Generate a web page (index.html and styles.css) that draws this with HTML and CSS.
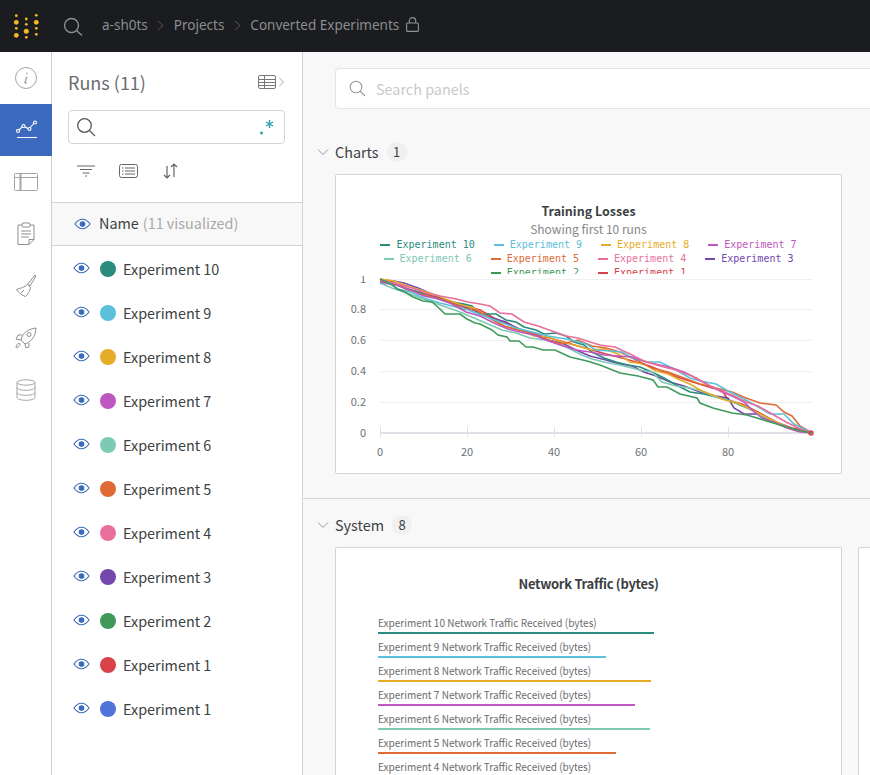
FILE: index.html
```html
<!DOCTYPE html>
<html lang="en">
<head>
    <meta charset="UTF-8">
    <meta name="viewport" content="width=device-width, initial-scale=1.0">
    <title>Converted Experiments</title>
    <link rel="stylesheet" href="styles.css">
</head>
<body>
    <svg class="defs" width="0" height="0">
        <symbol id="eye" viewBox="0 0 18 12">
            <path d="M1 6C3.500 2.600 6 1 9 1s5.500 1.600 8 5c-2.500 3.400-5 5-8 5S3.500 9.400 1 6z" fill="none" stroke="#3a69bd" stroke-width="1.200"/>
            <circle cx="9" cy="6" r="3" fill="#3a69bd"/>
        </symbol>
        <symbol id="chev" viewBox="0 0 12 8">
            <path d="M1 1.500l5 5 5-5" fill="none" stroke="#999" stroke-width="1"/>
        </symbol>
    </svg>

    <!-- Top bar -->
    <header class="topbar">
        <svg class="logo" width="28" height="28" viewBox="0 0 28 28" fill="#f5b921">
            <circle cx="4.300" cy="3.700" r="1.400"/><circle cx="4.300" cy="10.300" r="2.400"/><circle cx="4.300" cy="16.300" r="1.400"/><circle cx="4.300" cy="23.300" r="2.400"/>
            <circle cx="14.300" cy="7" r="1.400"/><circle cx="14.300" cy="12.300" r="1.400"/><circle cx="14.300" cy="19.300" r="2.500"/><circle cx="14.300" cy="25.300" r="1.400"/>
            <circle cx="24.300" cy="3.300" r="1.400"/><circle cx="24.300" cy="10.300" r="2.400"/><circle cx="24.300" cy="16.300" r="1.400"/><circle cx="24.300" cy="22.300" r="1.400"/>
        </svg>
        <svg class="top-search" width="20" height="20" viewBox="0 0 20 20" fill="none" stroke="#8f9194" stroke-width="1.400">
            <circle cx="8.500" cy="8.500" r="7"/><path d="M13.500 13.500l5.500 5"/>
        </svg>
        <nav class="crumbs">
            <span>a-sh0ts</span>
            <svg width="7" height="11" viewBox="0 0 7 11"><path d="M1 1l5 4.500-5 4.500" fill="none" stroke="#55575a"/></svg>
            <span>Projects</span>
            <svg width="7" height="11" viewBox="0 0 7 11"><path d="M1 1l5 4.500-5 4.500" fill="none" stroke="#55575a"/></svg>
            <span>Converted Experiments</span>
            <svg width="13" height="15" viewBox="0 0 13 15" fill="none" stroke="#8f9194" stroke-width="1.100"><rect x="0.600" y="6" width="11.800" height="8.400" rx="1"/><path d="M3.300 6V3.800a3.200 3.200 0 0 1 6.400 0V6"/></svg>
        </nav>
    </header>

    <div class="layout">
        <!-- Icon rail -->
        <aside class="rail">
            <div class="rail-item">
                <svg width="24" height="24" viewBox="0 0 24 24" fill="none" stroke="#a5a5a5" stroke-width="1"><circle cx="12" cy="12" r="10.500"/><path d="M12.900 6.800v1.400M12.800 10.500l-1.900 6.300c0 .6.800.5 1.800-.5" stroke-width="1.300"/></svg>
            </div>
            <div class="rail-item active">
                <svg width="22" height="20" viewBox="0 0 22 20" fill="none" stroke="#fff" stroke-width="1.100"><path d="M2 11l5-5 6 3 6-7"/><circle cx="2" cy="11" r="1.500" fill="#3a69bd"/><circle cx="7.500" cy="6" r="1.500" fill="#3a69bd"/><circle cx="13.500" cy="9" r="1.500" fill="#3a69bd"/><circle cx="19" cy="2.500" r="1.500" fill="#3a69bd"/><path d="M1 17.500h20"/></svg>
            </div>
            <div class="rail-item">
                <svg width="24" height="18" viewBox="0 0 24 18" fill="none" stroke="#a5a5a5" stroke-width="1"><rect x="0.500" y="0.500" width="23" height="17" rx="1"/><path d="M1 4.500h22"/><path d="M6.500 1v16" stroke-width="2"/></svg>
            </div>
            <div class="rail-item">
                <svg width="18" height="24" viewBox="0 0 18 24" fill="none" stroke="#8f8f8f" stroke-width="1"><path d="M5 3H1v19.500h11l5-5V3h-4"/><path d="M12 22.500v-5h5"/><rect x="5" y="1" width="8" height="4" rx="1"/><path d="M4 9h10M4 12h10M4 15h8"/></svg>
            </div>
            <div class="rail-item">
                <svg width="22" height="24" viewBox="0 0 22 24" fill="none" stroke="#8f8f8f" stroke-width="1"><path d="M20 1l1 1-6 10-2.500-1.500z"/><path d="M12.500 10.500c-3 3-7 3.500-11 5 2 3 5.500 6 9 7 2-2 5-5.500 5-9.500z"/><path d="M6 19l3-3"/></svg>
            </div>
            <div class="rail-item">
                <svg width="22" height="22" viewBox="0 0 22 22" fill="none" stroke="#8f8f8f" stroke-width="1"><path d="M6 13c1-6 6-11 15-12 0 8-5 14-11 16z"/><circle cx="14" cy="7.500" r="2"/><path d="M7 8H3l-2 4 5 1M14 16v4l-3 1-1-4"/><path d="M4 16c-2 1-3 3-3 4.500 2 0 3.500-1 4-3z"/></svg>
            </div>
            <div class="rail-item">
                <svg width="20" height="22" viewBox="0 0 20 22" fill="none" stroke="#a5a5a5" stroke-width="1"><ellipse cx="10" cy="3.500" rx="9" ry="2.700"/><path d="M1 3.500v15c0 1.500 4 2.800 9 2.800s9-1.300 9-2.800v-15"/><path d="M1 8.500c0 1.500 4 2.800 9 2.800s9-1.300 9-2.800M1 13.500c0 1.500 4 2.800 9 2.800s9-1.300 9-2.800"/></svg>
            </div>
        </aside>

        <!-- Runs list -->
        <section class="runs">
            <div class="runs-head">
                <h2>Runs (11)</h2>
                <svg width="27" height="14" viewBox="0 0 27 14" fill="none" stroke="#777" stroke-width="1"><rect x="0.500" y="0.500" width="17" height="13" rx="1.500"/><path d="M1 4.500h16M1 7.500h16M1 10.500h16"/><path d="M6.500 1v12"/><path d="M21.500 3l4 4-4 4" stroke="#aaa"/></svg>
            </div>
            <div class="runs-search">
                <svg width="20" height="20" viewBox="0 0 20 20" fill="none" stroke="#555" stroke-width="1.300"><circle cx="8.500" cy="8.500" r="6.800"/><path d="M13.500 13.500l5.500 5.500"/></svg>
                <svg width="15" height="18" viewBox="0 0 15 18"><circle cx="2.500" cy="15" r="1.500" fill="#2f9fb0"/><path d="M10.500 2v8M7 4l7 4M14 4L7 8" stroke="#2f9fb0" stroke-width="1.400"/></svg>
            </div>
            <div class="runs-tools">
                <svg width="18" height="12" viewBox="0 0 18 12" stroke="#666" stroke-width="1.200"><path d="M0 1h18M3 4.500h12M5.500 8h7M8 11h2"/></svg>
                <svg width="19" height="14" viewBox="0 0 19 14" fill="none" stroke="#666" stroke-width="1"><rect x="0.500" y="0.500" width="18" height="13" rx="2"/><path d="M3 4h1.500M6 4h10M3 7h1.500M6 7h10M3 10h1.500M6 10h10"/></svg>
                <svg width="15" height="16" viewBox="0 0 15 16" fill="none" stroke="#666" stroke-width="1.200"><path d="M4 3v12M1 12l3 3 3-3"/><path d="M11 14V1M8 4l3-3 3 3"/></svg>
            </div>
            <div class="runs-name">
                <svg width="17" height="12"><use href="#eye"/></svg>
                <span>Name</span> <em>(11 visualized)</em>
            </div>
            <ul class="run-list">
                <li><svg width="17" height="12"><use href="#eye"/></svg><i style="background:#2a8c7c"></i><span>Experiment 10</span></li>
                <li><svg width="17" height="12"><use href="#eye"/></svg><i style="background:#5bc0d9"></i><span>Experiment 9</span></li>
                <li><svg width="17" height="12"><use href="#eye"/></svg><i style="background:#e6ac27"></i><span>Experiment 8</span></li>
                <li><svg width="17" height="12"><use href="#eye"/></svg><i style="background:#bf57c0"></i><span>Experiment 7</span></li>
                <li><svg width="17" height="12"><use href="#eye"/></svg><i style="background:#7cc9b4"></i><span>Experiment 6</span></li>
                <li><svg width="17" height="12"><use href="#eye"/></svg><i style="background:#e06a35"></i><span>Experiment 5</span></li>
                <li><svg width="17" height="12"><use href="#eye"/></svg><i style="background:#e86f9c"></i><span>Experiment 4</span></li>
                <li><svg width="17" height="12"><use href="#eye"/></svg><i style="background:#7447ad"></i><span>Experiment 3</span></li>
                <li><svg width="17" height="12"><use href="#eye"/></svg><i style="background:#3f9a5a"></i><span>Experiment 2</span></li>
                <li><svg width="17" height="12"><use href="#eye"/></svg><i style="background:#d8434a"></i><span>Experiment 1</span></li>
                <li><svg width="17" height="12"><use href="#eye"/></svg><i style="background:#4f73d9"></i><span>Experiment 1</span></li>
            </ul>
        </section>

        <!-- Panels -->
        <main class="panels">
            <div class="panel-search">
                <svg width="17" height="17" viewBox="0 0 17 17" fill="none" stroke="#999" stroke-width="1.100"><circle cx="7" cy="7" r="5.800"/><path d="M11 11l5 5"/></svg>
                <span>Search panels</span>
            </div>

            <div class="group-head">
                <svg width="12" height="8"><use href="#chev"/></svg>
                <span>Charts</span>
                <b>1</b>
            </div>
            <div class="cards">
                <div class="card">
                    <div class="chart-title">Training Losses</div>
                    <div class="chart-sub">Showing first 10 runs</div>
                    <div class="legend">
                        <span class="c10">Experiment 10</span>
                        <span class="c9">Experiment 9</span>
                        <span class="c8">Experiment 8</span>
                        <span class="c7">Experiment 7</span>
                        <span class="c6">Experiment 6</span>
                        <span class="c5">Experiment 5</span>
                        <span class="c4">Experiment 4</span>
                        <span class="c3">Experiment 3</span>
                        <span class="c2">Experiment 2</span>
                        <span class="c1">Experiment 1</span>
                    </div>
                    <svg class="plot" width="505" height="197" viewBox="336 276 505 197">
                        <g class="grid">
                            <path d="M380 279.500h432M380 309.500h432M380 340.500h432M380 371.500h432M380 402.500h432"/>
                        </g>
                        <path class="axis" d="M380 433h432"/>
                        <path class="tick" d="M380.500 427v10M467.500 427v10M554.500 427v10M641.500 427v10M728.500 427v10"/>
                        <g class="ylab">
                            <text x="366" y="283">1</text>
                            <text x="366" y="313">0.8</text>
                            <text x="366" y="344">0.6</text>
                            <text x="366" y="375">0.4</text>
                            <text x="366" y="406">0.2</text>
                            <text x="366" y="437">0</text>
                        </g>
                        <g class="xlab">
                            <text x="380" y="456">0</text>
                            <text x="467" y="456">20</text>
                            <text x="554" y="456">40</text>
                            <text x="641" y="456">60</text>
                            <text x="728" y="456">80</text>
                        </g>
                        <g class="lines">
                            <polyline stroke="#d8434a" points="380,281 396,284 408,290 424,293 438,298 450,301 466,306 480,310 494,318 508,324 522,330 536,335 550,338 564,342 578,346 592,350 606,354 622,358 636,362 650,366 664,372 680,378 696,383 712,388 722,390 728,400 742,404 758,412 776,422 792,428 806,430 812,433"/>
                            <polyline stroke="#7447ad" points="382,280 394,281 404,283 418,288 432,294 448,301 462,306 478,312 492,318 506,322 520,330 534,333 548,340 562,343 576,350 590,356 606,360 620,364 632,366 644,372 656,376 670,382 684,386 700,392 716,396 728,398 734,408 744,414 758,414 772,420 788,428 812,433"/>
                            <polyline stroke="#2a8c7c" points="380,279 392,282 404,288 416,291 428,296 440,299 452,302 464,304 472,306 480,314 496,314 506,320 516,322 524,327 536,330 544,334 556,333 566,336 574,342 584,345 592,352 604,358 616,362 628,365 640,367 652,372 664,378 676,385 690,392 704,394 716,397 728,400 740,405 752,410 768,420 785,427 800,431 812,433"/>
                            <polyline stroke="#7cc9b4" points="380,283 392,288 404,292 418,297 432,302 446,307 460,312 474,318 488,324 502,330 516,333 530,338 546,340 560,344 572,350 582,355 592,359 604,362 620,365 640,370 652,372 662,382 676,386 690,388 704,392 718,398 734,402 748,408 762,416 778,423 794,430 812,433"/>
                            <polyline stroke="#e6ac27" points="380,279 394,281 408,286 420,290 436,295 450,301 462,305 474,308 486,316 496,322 506,327 520,330 534,336 548,337 562,342 578,346 592,350 604,349 618,354 630,362 644,364 656,371 668,374 680,380 690,384 700,390 710,394 725,400 740,404 756,412 772,420 788,428 800,431 812,433"/>
                            <polyline stroke="#e06a35" points="380,280 394,283 406,288 420,294 436,298 450,302 462,308 476,310 490,318 504,326 518,330 534,334 548,340 562,344 578,340 592,346 606,348 620,352 636,360 652,368 668,372 684,378 700,384 716,388 732,392 746,398 760,403 776,405 784,412 792,416 800,426 812,433"/>
                            <polyline stroke="#5bc0d9" points="380,283 390,284 398,289 410,292 424,298 440,303 452,306 468,310 484,316 500,322 516,328 532,332 548,336 560,338 572,340 586,344 596,350 610,351 622,352 632,358 648,362 660,362 676,370 690,378 700,381 716,384 730,392 744,399 760,408 770,414 784,414 794,424 806,430 812,433"/>
                            <polyline stroke="#bf57c0" points="380,282 396,285 410,290 424,296 438,299 452,304 466,312 480,316 494,323 508,329 520,332 534,335 546,340 560,345 576,350 590,352 604,355 618,356 632,357 646,362 660,365 672,368 684,372 696,378 710,386 722,392 732,396 744,402 752,410 762,418 776,423 790,429 800,432 812,433"/>
                            <polyline stroke="#e86f9c" points="380,280 398,284 412,288 426,293 440,296 456,299 468,302 480,304 490,306 500,313 512,314 524,322 538,326 552,331 566,336 578,338 590,342 600,345 615,347 630,354 644,361 660,366 676,370 692,376 706,384 720,390 734,396 746,402 758,406 772,414 786,422 798,428 812,433"/>
                            <polyline stroke="#3f9a5a" points="380,279 393,285 397,289 403,291 413,297 423,301 432,302 440,309 445,314 460,314 467,319 475,323 480,324 492,330 498,335 507,337 510,341 519,341 526,347 533,347 543,350 555,350 570,357 587,361 600,365 620,373 638,376 653,380 658,387 667,387 680,394 697,398 700,403 713,408 732,413 747,415 770,422 797,430 812,433"/>
                        </g>
                        <circle cx="811" cy="433" r="2" fill="none" stroke="#d8434a" stroke-width="1.500"/>
                    </svg>
                </div>
            </div>

            <div class="divider"></div>

            <div class="group-head">
                <svg width="12" height="8"><use href="#chev"/></svg>
                <span>System</span>
                <b>8</b>
            </div>
            <div class="cards">
                <div class="card">
                    <div class="bars-title">Network Traffic (bytes)</div>
                    <div class="bars">
                        <div class="bar-row"><span>Experiment 10 Network Traffic Received (bytes)</span><i style="width:276px;background:#2a8c7c"></i></div>
                        <div class="bar-row"><span>Experiment 9 Network Traffic Received (bytes)</span><i style="width:228px;background:#5bc0d9"></i></div>
                        <div class="bar-row"><span>Experiment 8 Network Traffic Received (bytes)</span><i style="width:273px;background:#e6ac27"></i></div>
                        <div class="bar-row"><span>Experiment 7 Network Traffic Received (bytes)</span><i style="width:257px;background:#bf57c0"></i></div>
                        <div class="bar-row"><span>Experiment 6 Network Traffic Received (bytes)</span><i style="width:272px;background:#7cc9b4"></i></div>
                        <div class="bar-row"><span>Experiment 5 Network Traffic Received (bytes)</span><i style="width:238px;background:#e06a35"></i></div>
                        <div class="bar-row"><span>Experiment 4 Network Traffic Received (bytes)</span><i style="width:262px;background:#e86f9c"></i></div>
                    </div>
                </div>
                <div class="card"></div>
            </div>
        </main>
    </div>
</body>
</html>
```

FILE: styles.css
```css
* {
    box-sizing: border-box;
}
html, body {
    margin: 0;
    height: 775px;
    overflow: hidden;
}
body {
    font-family: "Noto Sans CJK SC", "Noto Sans", sans-serif;
    color: #3c3f43;
    background-color: #fff;
}
.defs {
    position: absolute;
}
svg {
    display: block;
    flex-shrink: 0;
}

/* Top bar */
.topbar {
    height: 52px;
    background-color: #1a1c1f;
    display: flex;
    align-items: center;
}
.logo {
    margin-left: 12px;
}
.top-search {
    margin-left: 23px;
    margin-top: 2px;
}
.crumbs {
    display: flex;
    align-items: center;
    margin-left: 19px;
    margin-bottom: 3px;
    font-family: "Noto Sans", sans-serif;
    font-size: 13.500px;
    color: #8b8d90;
}
.crumbs svg {
    margin: 2px 9.500px 0;
}
.crumbs svg:last-child {
    margin: 0 0 0 7px;
}

.layout {
    display: flex;
    height: 723px;
}

/* Icon rail */
.rail {
    width: 52px;
    flex-shrink: 0;
    border-right: 1px solid #cfcfcf;
}
.rail-item {
    height: 52px;
    display: flex;
    align-items: center;
    justify-content: center;
    padding-left: 1px;
}
.rail-item.active {
    background-color: #3a69bd;
    margin-right: -1px;
}

/* Runs */
.runs {
    width: 251px;
    flex-shrink: 0;
    border-right: 1px solid #d4d4d4;
}
.runs-head {
    display: flex;
    align-items: center;
    justify-content: space-between;
    height: 24px;
    margin: 18px 17px 0 16px;
}
.runs-head h2 {
    margin: 0;
    font-size: 18px;
    font-weight: 400;
    line-height: 24px;
    color: #6b6d70;
}
.runs-search {
    display: flex;
    align-items: center;
    justify-content: space-between;
    height: 34px;
    margin: 16px 17px 0 16px;
    padding: 0 10px 0 7px;
    border: 1px solid #d4d4d4;
    border-radius: 4px;
}
.runs-tools {
    display: flex;
    align-items: center;
    gap: 24px;
    height: 20px;
    margin-top: 17px;
    padding-left: 25px;
}
.runs-tools svg:last-child {
    margin-left: 1px;
}
.runs-name {
    display: flex;
    align-items: center;
    height: 44px;
    margin-top: 21px;
    padding-left: 22px;
    background-color: #f8f8f8;
    border-top: 1px solid #d4d4d4;
    border-bottom: 1px solid #d4d4d4;
    font-size: 14.400px;
}
.runs-name span {
    margin: -4px 0 0 8px;
}
.runs-name em {
    margin: -4px 0 0 4px;
    font-style: normal;
    color: #a8a8a8;
}
.run-list {
    list-style: none;
    margin: 0;
    padding: 1px 0 0;
}
.run-list li {
    display: flex;
    align-items: center;
    height: 44px;
    padding-left: 21px;
    font-size: 14.400px;
}
.run-list li svg {
    margin-top: -2px;
}
.run-list li span {
    margin-top: -2px;
}
.run-list i {
    width: 16px;
    height: 16px;
    margin: 0 7px 0 10px;
    border-radius: 50%;
}

/* Panels */
.panels {
    flex: 1;
    min-width: 0;
    background-color: #f8f8f8;
    overflow: hidden;
}
.panel-search {
    display: flex;
    align-items: center;
    gap: 10px;
    width: 600px;
    height: 41px;
    margin: 16px 0 0 32px;
    padding-left: 13px;
    background-color: #fff;
    border: 1px solid #e4e4e4;
    border-radius: 4px;
    font-size: 14.400px;
    color: #c9c9c9;
}
.group-head {
    display: flex;
    align-items: center;
    height: 24px;
    margin-top: 31px;
    padding-left: 14px;
    font-size: 14.400px;
}
.group-head span {
    margin: -2px 0 0 6px;
}
.group-head b {
    width: 20px;
    height: 20px;
    margin-left: 8px;
    border-radius: 50%;
    background-color: #f0f0f0;
    font-size: 13px;
    font-weight: 400;
    line-height: 20px;
    text-align: center;
}
.cards {
    display: flex;
    gap: 16px;
    margin-top: 10px;
    padding-left: 32px;
}
.card {
    width: 507px;
    flex-shrink: 0;
    background-color: #fff;
    border: 1px solid #d4d4d4;
    border-radius: 2px;
}
.divider {
    height: 1px;
    margin-top: 24px;
    background-color: #d4d4d4;
}
.divider + .group-head {
    margin-top: 14px;
}

/* Training chart */
.chart-title {
    margin-top: 27px;
    font-size: 12.500px;
    font-weight: 700;
    line-height: 18px;
    text-align: center;
}
.chart-sub {
    font-size: 12px;
    line-height: 18px;
    text-align: center;
    color: #858789;
}
.legend {
    display: flex;
    flex-wrap: wrap;
    justify-content: center;
    column-gap: 19px;
    width: 432px;
    height: 36px;
    margin: 0 auto 2px;
    overflow: hidden;
    font-family: "DejaVu Sans Mono", monospace;
    font-size: 10px;
    line-height: 14px;
}
.legend span {
    display: flex;
    align-items: center;
    gap: 6px;
    height: 14px;
}
.legend span::before {
    content: "";
    width: 10px;
    height: 2px;
    background-color: currentColor;
}
.c10 { color: #2a8c7c; }
.c9 { color: #5bc0d9; }
.c8 { color: #e6ac27; }
.c7 { color: #bf57c0; }
.c6 { color: #7cc9b4; }
.c5 { color: #e06a35; }
.c4 { color: #e86f9c; }
.c3 { color: #7447ad; }
.c2 { color: #3f9a5a; }
.c1 { color: #d8434a; }

.grid path {
    fill: none;
    stroke: #f0f0f2;
    stroke-width: 1;
}
.axis {
    fill: none;
    stroke: #e0e0e6;
    stroke-width: 2;
}
.tick {
    fill: none;
    stroke: #e0e0e6;
    stroke-width: 1;
}
.ylab text, .xlab text {
    font-size: 11px;
    fill: #6f7174;
}
.ylab text {
    text-anchor: end;
}
.xlab text {
    text-anchor: middle;
}
.lines polyline {
    fill: none;
    stroke-width: 1.600;
}

/* Network chart */
.bars-title {
    margin-top: 27px;
    font-size: 13px;
    font-weight: 700;
    letter-spacing: -0.300px;
    line-height: 18px;
    text-align: center;
}
.bars {
    margin-top: 18px;
    padding-left: 42px;
}
.bar-row {
    height: 24px;
}
.bar-row span {
    display: block;
    height: 22px;
    font-size: 11px;
    line-height: 22px;
    color: #6b6d70;
    white-space: nowrap;
    transform: scaleX(0.91);
    transform-origin: left center;
}
.bar-row i {
    display: block;
    height: 2px;
    margin-top: -1px;
}
```
